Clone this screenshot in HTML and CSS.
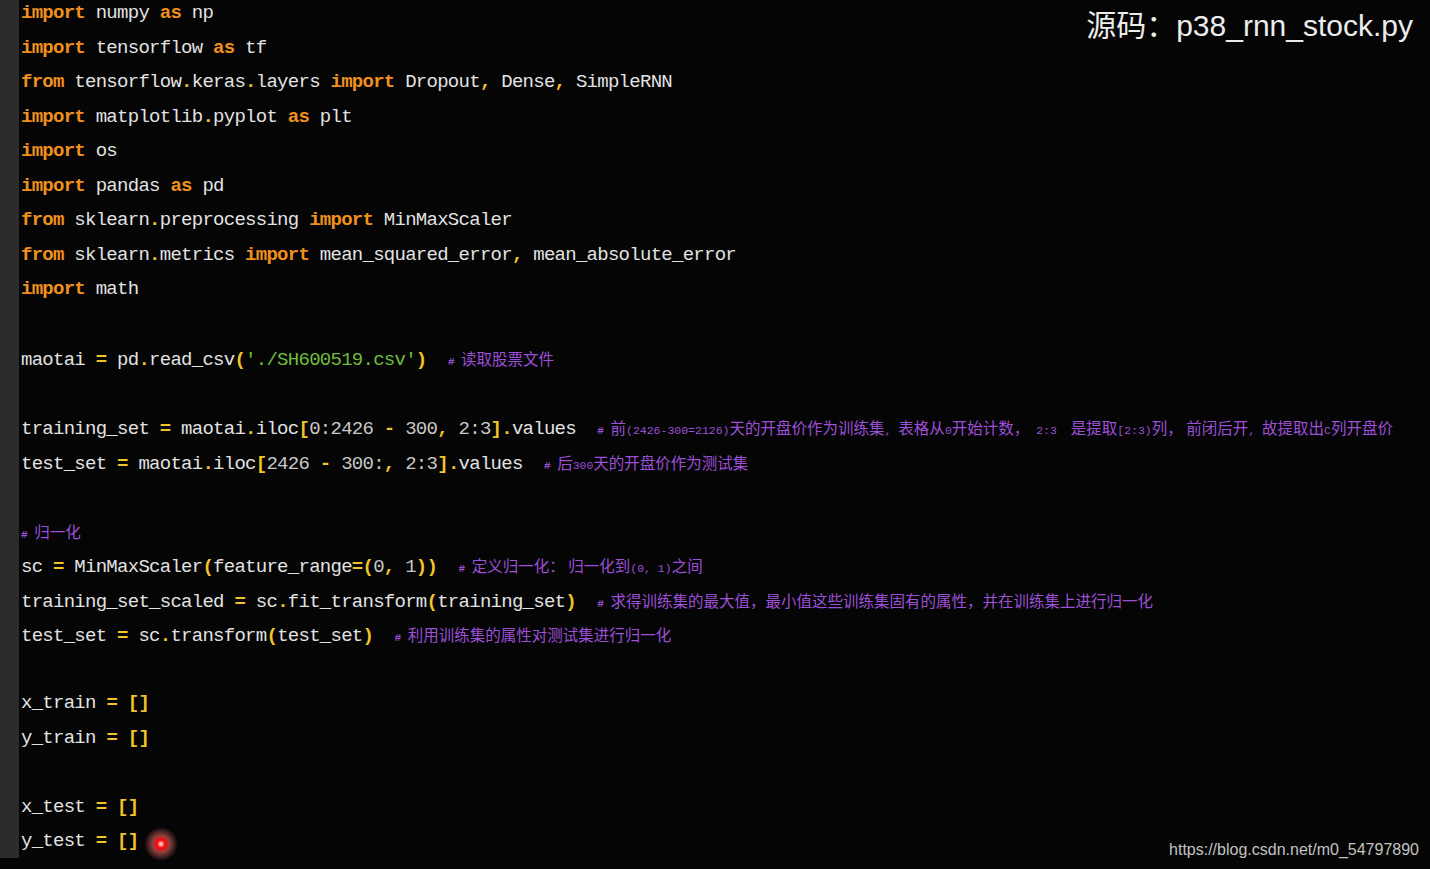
FILE: index.html
```html
<html>
<head>
    <title>p38_rnn_stock.py</title>
    <link rel="stylesheet" href="styles.css">
</head>
<body>
    <section class="screen">
        <div class="gutter"></div>
        <div class="code">
            <div class="ln"><span class="kw">import</span> numpy <span class="kw">as</span> np</div>
            <div class="ln"><span class="kw">import</span> tensorflow <span class="kw">as</span> tf</div>
            <div class="ln"><span class="kw">from</span> tensorflow<span class="p">.</span>keras<span class="p">.</span>layers <span class="kw">import</span> Dropout<span class="p">,</span> Dense<span class="p">,</span> SimpleRNN</div>
            <div class="ln"><span class="kw">import</span> matplotlib<span class="p">.</span>pyplot <span class="kw">as</span> plt</div>
            <div class="ln"><span class="kw">import</span> os</div>
            <div class="ln"><span class="kw">import</span> pandas <span class="kw">as</span> pd</div>
            <div class="ln"><span class="kw">from</span> sklearn<span class="p">.</span>preprocessing <span class="kw">import</span> MinMaxScaler</div>
            <div class="ln"><span class="kw">from</span> sklearn<span class="p">.</span>metrics <span class="kw">import</span> mean_squared_error<span class="p">,</span> mean_absolute_error</div>
            <div class="ln"><span class="kw">import</span> math</div>
            <div class="ln"></div>
            <div class="ln">maotai <span class="p">=</span> pd<span class="p">.</span>read_csv<span class="p">(</span><span class="str">'./SH600519.csv'</span><span class="p">)</span>  <span class="cm"><span class="hash"># </span>读取股票文件</span></div>
            <div class="ln"></div>
            <div class="ln">training_set <span class="p">=</span> maotai<span class="p">.</span>iloc<span class="p">[</span><span class="num">0:2426</span> <span class="p">-</span> <span class="num">300</span><span class="p">,</span> <span class="num">2:3</span><span class="p">]</span><span class="p">.</span>values  <span class="cm"><span class="hash"># </span>前<span class="a">(2426-300=2126)</span>天的开盘价作为训练集<span class="a">, </span>表格从<span class="a">0</span>开始计数，<span class="a"> 2:3  </span>是提取<span class="a">[2:3)</span>列， 前闭后开<span class="a">, </span>故提取出<span class="a">C</span>列开盘价</span></div>
            <div class="ln">test_set <span class="p">=</span> maotai<span class="p">.</span>iloc<span class="p">[</span><span class="num">2426</span> <span class="p">-</span> <span class="num">300:</span><span class="p">,</span> <span class="num">2:3</span><span class="p">]</span><span class="p">.</span>values  <span class="cm"><span class="hash"># </span>后<span class="a">300</span>天的开盘价作为测试集</span></div>
            <div class="ln"></div>
            <div class="ln"><span class="cm"><span class="hash"># </span>归一化</span></div>
            <div class="ln">sc <span class="p">=</span> MinMaxScaler<span class="p">(</span>feature_range<span class="p">=(</span><span class="num">0</span><span class="p">,</span> <span class="num">1</span><span class="p">))</span>  <span class="cm"><span class="hash"># </span>定义归一化： 归一化到<span class="a">(0, 1)</span>之间</span></div>
            <div class="ln">training_set_scaled <span class="p">=</span> sc<span class="p">.</span>fit_transform<span class="p">(</span>training_set<span class="p">)</span>  <span class="cm"><span class="hash"># </span>求得训练集的最大值，最小值这些训练集固有的属性，并在训练集上进行归一化</span></div>
            <div class="ln">test_set <span class="p">=</span> sc<span class="p">.</span>transform<span class="p">(</span>test_set<span class="p">)</span>  <span class="cm"><span class="hash"># </span>利用训练集的属性对测试集进行归一化</span></div>
            <div class="ln"></div>
            <div class="ln">x_train <span class="p">=</span> <span class="p">[]</span></div>
            <div class="ln">y_train <span class="p">=</span> <span class="p">[]</span></div>
            <div class="ln"></div>
            <div class="ln">x_test <span class="p">=</span> <span class="p">[]</span></div>
            <div class="ln">y_test <span class="p">=</span> <span class="p">[]</span></div>
        </div>
        <div class="title">源码：p38_rnn_stock.py</div>
        <div class="cursor"></div>
        <div class="mark">https://blog.csdn.net/m0_54797890</div>
    </section>
</body>
</html>
```

FILE: styles.css
```css
body {
    margin: 0;
    background-color: #000;
}
.screen {
    position: relative;
    display: flex;
    width: 1430px;
    height: 869px;
    overflow: hidden;
    background-color: #050505;
}
.gutter {
    width: 19px;
    height: 858px;
    background-color: #2c2c2c;
    flex: none;
}
.code {
    margin-top: -4px;
    padding-left: 2px;
    font-family: "Liberation Mono", monospace;
    font-size: 19px;
    letter-spacing: -0.73px;
    color: #e2e2e2;
}
.ln {
    height: 34.5px;
    line-height: 34.5px;
    white-space: pre;
}
.kw {
    color: #f0901f;
    font-weight: bold;
}
.p {
    color: #f2c42a;
    font-weight: bold;
}
.num {
    color: #c8c8c8;
}
.str {
    color: #6fbd3c;
}
.cm {
    font-family: "Noto Sans CJK SC", sans-serif;
    font-size: 15.5px;
    letter-spacing: 0;
    color: #9d4fd8;
}
.hash {
    font-family: "Liberation Mono", monospace;
    font-size: 11px;
    font-weight: bold;
}
.a {
    font-family: "Liberation Mono", monospace;
    font-size: 11.5px;
}
.title {
    position: absolute;
    top: 1px;
    right: 17px;
    font-family: "Liberation Sans", "Noto Sans CJK SC", sans-serif;
    font-size: 30px;
    color: #ececec;
}
.mark {
    position: absolute;
    right: 11px;
    bottom: 10px;
    font-family: "Liberation Sans", sans-serif;
    font-size: 16px;
    color: #c2c2c2;
}
.cursor {
    position: absolute;
    left: 144px;
    top: 827px;
    width: 34px;
    height: 34px;
    border-radius: 50%;
    background: radial-gradient(circle, #ffe0e0 0, #ff9090 2px, #ff1414 3.5px, #e81010 5.5px, rgba(240, 110, 110, 0.6) 8px, rgba(220, 100, 100, 0.3) 13px, rgba(0, 0, 0, 0) 17px);
}
```
